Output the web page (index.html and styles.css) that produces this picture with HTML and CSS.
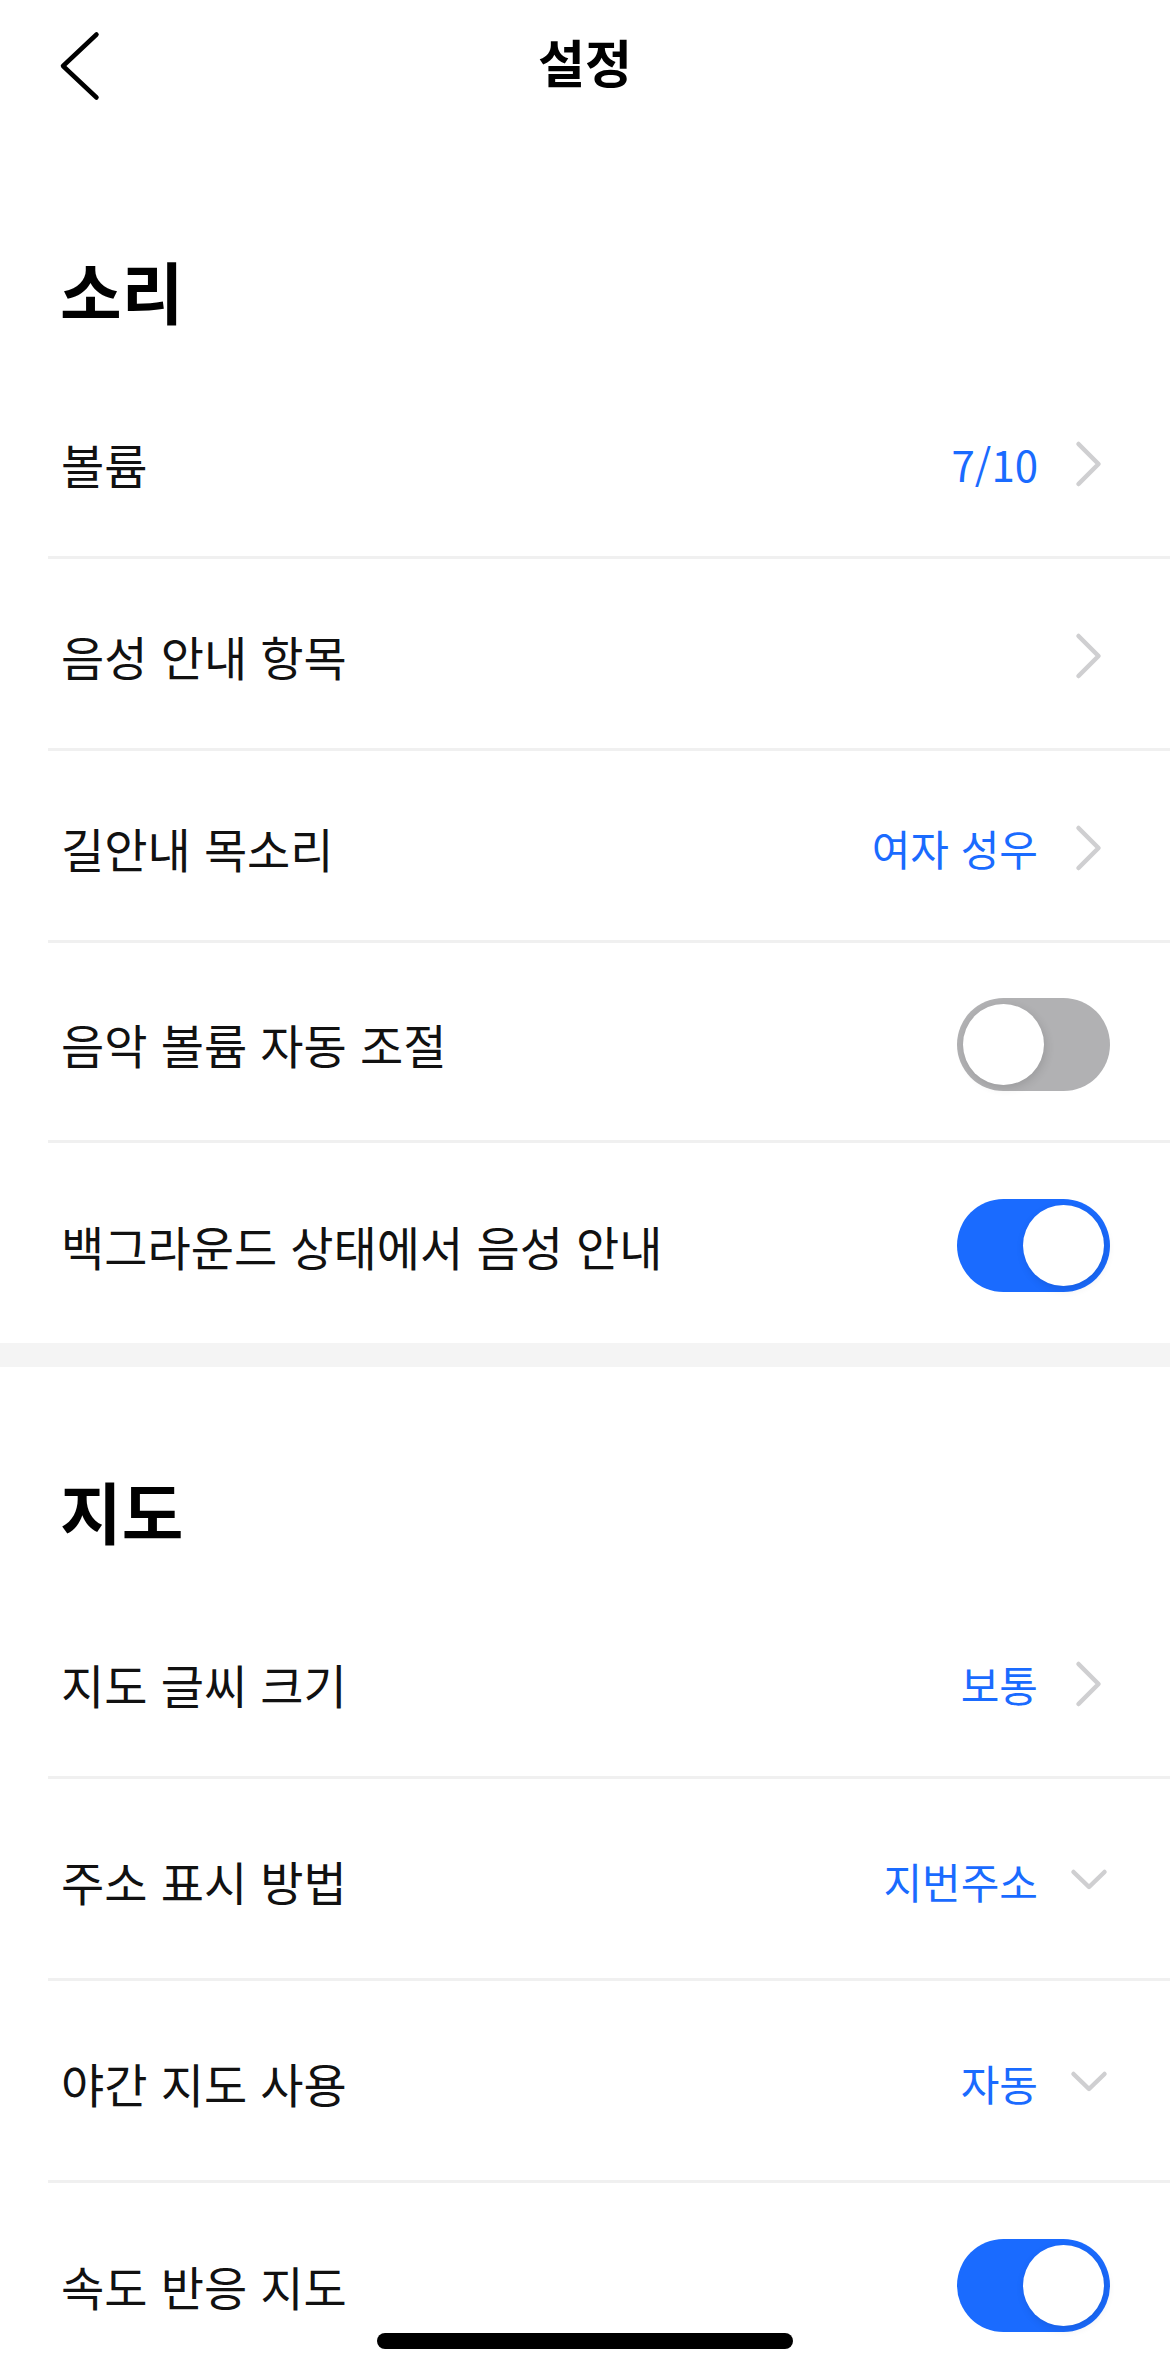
FILE: index.html
```html
<!DOCTYPE html>
<html lang="ko">

<head>
    <meta charset="UTF-8">
    <meta name="viewport" content="width=device-width, initial-scale=1.0">
    <title>설정</title>
    <link rel="stylesheet" href="styles.css">
</head>

<body>

    <div class="topbar">
        <button class="back" aria-label="뒤로">
            <svg width="44" height="72" viewBox="0 0 44 72">
                <path d="M38.5 4.5 L5 36 L38.5 67.5" />
            </svg>
        </button>
        <h1 class="title">설정</h1>
        <div></div>
    </div>

    <section class="section">
        <h2 class="section-title">소리</h2>

        <div class="row">
            <span class="label">볼륨</span>
            <span class="value">7/10</span>
            <svg class="icon" width="44" height="48" viewBox="0 0 44 48">
                <path d="M12.5 4 L32.5 24 L12.5 44" />
            </svg>
        </div>

        <div class="row">
            <span class="label">음성 안내 항목</span>
            <svg class="icon" width="44" height="48" viewBox="0 0 44 48">
                <path d="M12.5 4 L32.5 24 L12.5 44" />
            </svg>
        </div>

        <div class="row">
            <span class="label">길안내 목소리</span>
            <span class="value">여자 성우</span>
            <svg class="icon" width="44" height="48" viewBox="0 0 44 48">
                <path d="M12.5 4 L32.5 24 L12.5 44" />
            </svg>
        </div>

        <div class="row row-toggle">
            <span class="label">음악 볼륨 자동 조절</span>
            <span class="switch"><span class="knob"></span></span>
        </div>

        <div class="row row-toggle">
            <span class="label">백그라운드 상태에서 음성 안내</span>
            <span class="switch on"><span class="knob"></span></span>
        </div>
    </section>

    <div class="band"></div>

    <section class="section">
        <h2 class="section-title">지도</h2>

        <div class="row">
            <span class="label">지도 글씨 크기</span>
            <span class="value">보통</span>
            <svg class="icon" width="44" height="48" viewBox="0 0 44 48">
                <path d="M12.5 4 L32.5 24 L12.5 44" />
            </svg>
        </div>

        <div class="row row-select">
            <span class="label">주소 표시 방법</span>
            <span class="value">지번주소</span>
            <svg class="icon" width="44" height="48" viewBox="0 0 44 48">
                <path d="M7.5 15 L23 30 L38.5 15" />
            </svg>
        </div>

        <div class="row row-select">
            <span class="label">야간 지도 사용</span>
            <span class="value">자동</span>
            <svg class="icon" width="44" height="48" viewBox="0 0 44 48">
                <path d="M7.5 15 L23 30 L38.5 15" />
            </svg>
        </div>

        <div class="row row-toggle">
            <span class="label">속도 반응 지도</span>
            <span class="switch on"><span class="knob"></span></span>
        </div>
    </section>

    <div class="home-indicator"></div>

</body>

</html>
```

FILE: styles.css
```css
/* Base */
html, body {
    height: 100%;
    overflow: hidden;
}

body {
    margin: 0;
    background: #ffffff;
    color: #111111;
    font-family: "Noto Sans CJK KR", "Noto Sans", sans-serif;
}

/* Header */
.topbar {
    display: grid;
    grid-template-columns: 1fr auto 1fr;
    align-items: start;
    height: 132px;
    margin-bottom: 15px;
}

.back {
    justify-self: start;
    margin: 30px 0 0 58px;
    padding: 0;
    border: none;
    background: none;
    cursor: pointer;
}

.back svg {
    display: block;
}

.back path {
    fill: none;
    stroke: #000000;
    stroke-width: 4.5;
    stroke-linecap: round;
    stroke-linejoin: round;
}

.title {
    margin: 0;
    padding-top: 31px;
    font-size: 51px;
    line-height: 60px;
    font-weight: 700;
    color: #000000;
}

/* Sections */
.section {
    padding-left: 48px;
}

.section-title {
    margin: 0;
    padding: 106px 0 40px 12px;
    font-size: 67px;
    line-height: 74px;
    font-weight: 700;
    color: #000000;
}

.band {
    height: 24px;
    background: #f4f4f4;
}

/* Setting rows */
.row {
    display: flex;
    align-items: center;
    height: 192px;
    box-sizing: border-box;
    padding: 5px 60px 0 13px;
    border-bottom: 3px solid #f0f0f0;
}

.row-toggle {
    height: 200px;
}

.row-select {
    height: 202px;
}

.section .row:last-child {
    border-bottom: none;
}

.label {
    flex: 1;
    font-size: 47px;
    line-height: 60px;
}

.value {
    margin-right: 28px;
    font-size: 42px;
    line-height: 60px;
    color: #1a6bff;
}

.icon {
    display: block;
    flex: none;
}

.icon path {
    fill: none;
    stroke: #cfcfd1;
    stroke-width: 4.5;
    stroke-linecap: round;
    stroke-linejoin: round;
}

/* Toggle switches */
.switch {
    display: flex;
    align-items: center;
    flex: none;
    width: 153px;
    height: 93px;
    padding: 6px;
    box-sizing: border-box;
    border-radius: 47px;
    background: #b1b1b3;
}

.switch.on {
    justify-content: flex-end;
    background: #1a6bff;
}

.knob {
    width: 81px;
    height: 81px;
    border-radius: 50%;
    background: #ffffff;
    box-shadow: 2px 3px 10px rgba(0, 0, 0, 0.12);
}

/* iOS home bar */
.home-indicator {
    position: fixed;
    left: 50%;
    bottom: 23px;
    width: 416px;
    height: 16px;
    margin-left: -208px;
    border-radius: 8px;
    background: #000000;
}
```
